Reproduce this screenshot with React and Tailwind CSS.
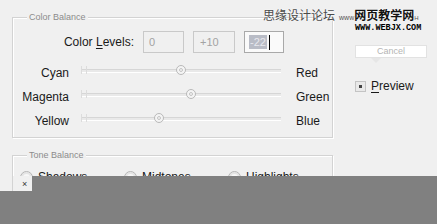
import React from "react";

const font = { fontFamily: '"Liberation Sans", Arial, sans-serif' };

function Group({ title, className, children }) {
  return (
    <div
      className={`relative border border-[#d3d3d3] shadow-[inset_1px_1px_0_#ffffff,1px_1px_0_#ffffff] ${className}`}
    >
      <span className="absolute -top-[7px] left-[14px] bg-[#f0f0f0] px-[2px] text-[9px] leading-[12px] text-[#8c8c8c]">
        {title}
      </span>
      {children}
    </div>
  );
}

function Slider({ left, right, value }) {
  return (
    <div className="flex h-[24px] items-center">
      <span className="w-[56px] text-right text-[12px] text-[#1a1a1a]">{left}</span>
      <div className="relative ml-[12px] -mt-[5px] h-[4px] w-[200px] border-y border-t-[#d6d6d6] border-b-white bg-[#e9e9e9]">
        <span className="absolute -top-[4px] left-0 h-[8px] w-[6px] border-x border-[#dcdcdc]" />
        <span
          className="absolute -top-[5px] flex h-[10px] w-[10px] -translate-x-1/2 items-center justify-center rounded-full border border-[#b9b9b9] bg-[#f4f4f4]"
          style={{ left: 100 + value }}
        >
          <span className="h-[4px] w-[4px] rounded-full border border-[#c4c4c4]" />
        </span>
      </div>
      <span className="ml-[15px] text-[12px] text-[#1a1a1a]">{right}</span>
    </div>
  );
}

function Radio({ label, className }) {
  return (
    <div className={`flex items-center gap-[5px] ${className}`}>
      <span className="h-[13px] w-[13px] rounded-full border border-[#b5b5b5] bg-[#f7f7f7] shadow-[inset_0_0_0_2px_#e4e4e4]" />
      <span className="text-[12px] text-[#1a1a1a]">{label}</span>
    </div>
  );
}

export default function App() {
  return (
    <div className="relative flex h-[224px] w-[437px] flex-col overflow-hidden bg-[#f0f0f0]" style={font}>
      <div className="flex h-[176px] overflow-hidden">
        <div className="w-[336px] pl-[12px] pt-[17px]">
          <Group title="Color Balance" className="h-[121px] w-[321px] pt-[13px]">
            <div className="flex h-[22px] items-center">
              <span className="ml-[50px] w-[71px] text-right text-[12px] text-[#1a1a1a]">
                Color <span className="underline underline-offset-2">L</span>evels:
              </span>
              <div className="ml-[9px] flex h-[22px] w-[41px] items-center border border-[#c9c9c9] pl-[5px] text-[11px] text-[#a3a3a3]">
                0
              </div>
              <div className="ml-[9px] flex h-[22px] w-[42px] items-center border border-[#c9c9c9] pl-[6px] text-[11px] text-[#a3a3a3]">
                +10
              </div>
              <div className="ml-[9px] flex h-[22px] w-[40px] items-center border border-[#a9a9a9] bg-[#fafafa] pl-[4px]">
                <span className="bg-[#b9bcc6] px-[1px] text-[11px] leading-[14px] text-[#e8e8ee]">-22</span>
                <span className="ml-[2px] h-[15px] w-[1px] bg-black" />
              </div>
            </div>
            <div className="mt-[8px] flex flex-col">
              <Slider left="Cyan" right="Red" value={0} />
              <Slider left="Magenta" right="Green" value={10} />
              <Slider left="Yellow" right="Blue" value={-22} />
            </div>
          </Group>
          <Group title="Tone Balance" className="mt-[17px] h-[60px] w-[321px] pt-[12px]">
            <div className="flex">
              <Radio label="Shadows" className="ml-[7px] w-[104px]" />
              <Radio label="Midtones" className="w-[104px]" />
              <Radio label="Highlights" />
            </div>
          </Group>
        </div>
        <div className="flex flex-1 flex-col pl-[19px] pt-[45px]">
          <div className="flex h-[13px] w-[72px] items-center justify-center border border-[#e2e2e2] bg-white text-[9px] text-[#b4b4b4]">
            Cancel
          </div>
          <span className="ml-[16px] h-0 w-0 border-x-[5px] border-t-[5px] border-x-transparent border-t-[#e6e6e6]" />
          <div className="mt-[14px] flex items-center gap-[5px]">
            <span className="flex h-[11px] w-[11px] items-center justify-center border border-[#c4c4c4] bg-[#e9e9e9]">
              <span className="h-[3px] w-[3px] bg-[#444]" />
            </span>
            <span className="text-[12px] text-[#1a1a1a]">
              <span className="underline underline-offset-2">P</span>review
            </span>
          </div>
        </div>
      </div>
      <div className="flex h-[15px]">
        <div className="relative w-[32px]">
          <span className="absolute left-[12px] top-0 h-[15px] w-[1px] bg-[#d3d3d3]" />
          <span className="absolute left-[22px] top-[3px] text-[9px] leading-[10px] text-[#333]">×</span>
        </div>
        <div className="flex-1 bg-[#808080]" />
      </div>
      <div className="flex-1 bg-[#808080]" />

      <div className="absolute left-[263px] top-[7px] flex items-start">
        <span
          className="text-[12px] leading-[15px] text-[#4a4a4a] [text-shadow:0_0_2px_#fff]"
          style={{ fontFamily: '"Noto Sans CJK SC", sans-serif' }}
        >
          思缘设计论坛
        </span>
        <div className="ml-[4px] flex flex-col">
          <div className="flex items-end">
            <span className="text-[7px] leading-[9px] text-[#555]">www</span>
            <span
              className="text-[12px] font-bold leading-[15px] text-[#111] [text-shadow:0_0_2px_#fff]"
              style={{ fontFamily: '"Noto Sans CJK SC", sans-serif' }}
            >
              网页教学网
            </span>
            <span className="text-[6px] leading-[8px] text-[#555]">H</span>
          </div>
          <span
            className="mt-[2px] ml-[16px] text-[8.5px] font-bold leading-[9px] text-black"
            style={{ fontFamily: '"Liberation Mono", monospace' }}
          >
            WWW.WEBJX.COM
          </span>
        </div>
      </div>
    </div>
  );
}
